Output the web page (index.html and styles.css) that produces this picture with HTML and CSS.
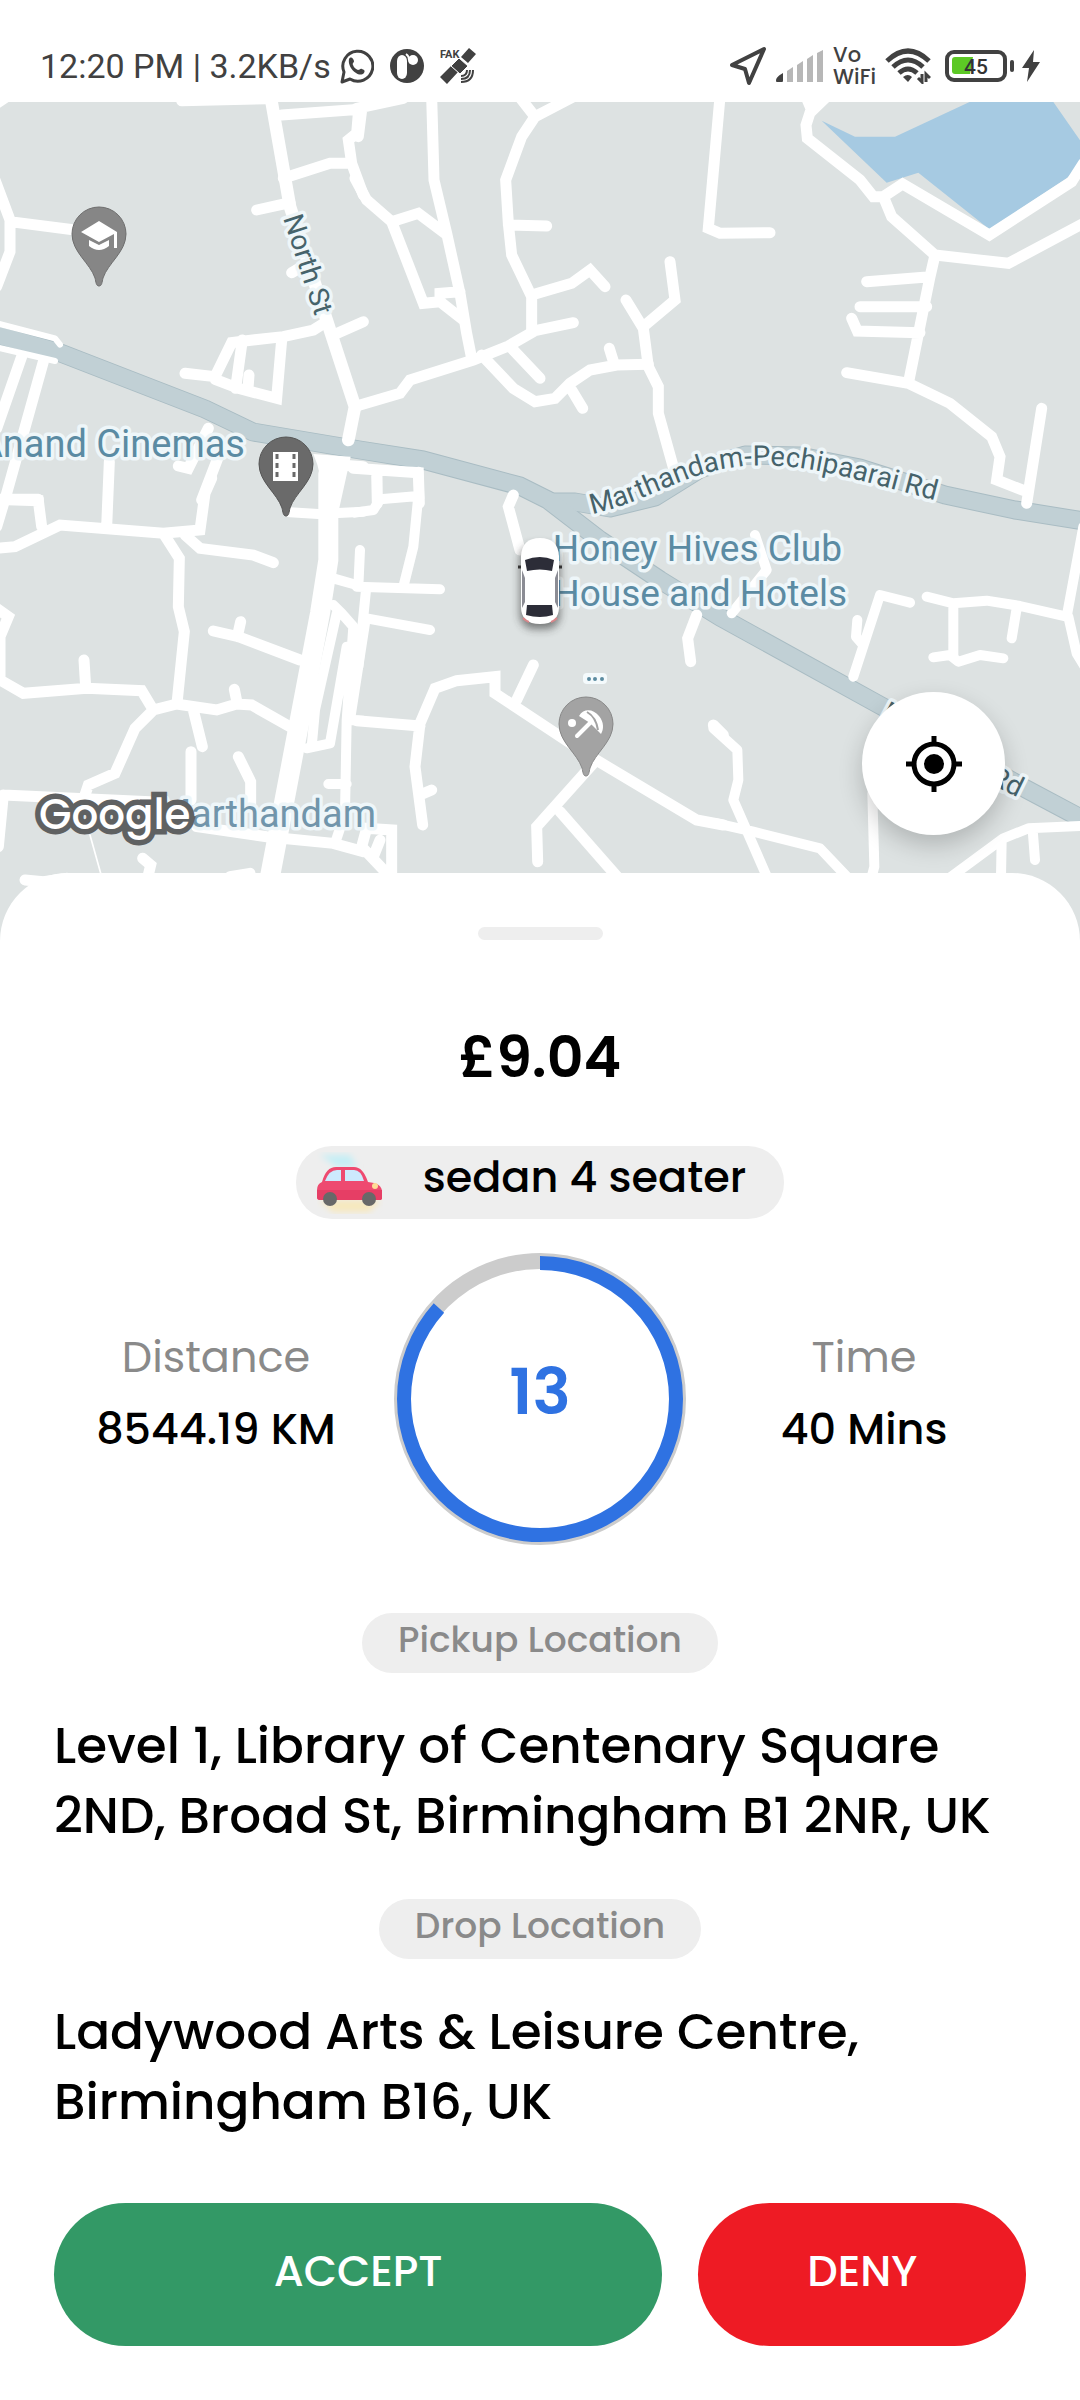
FILE: index.html
```html
<!DOCTYPE html>
<html lang="en">
<head>
<meta charset="utf-8">
<meta name="viewport" content="width=device-width, initial-scale=1">
<title>Ride request</title>
<link rel="stylesheet" href="styles.css">
</head>
<body>
<header class="status">
  <div class="status-left">
    <span>12:20 PM | 3.2KB/s</span>
    <div class="status-apps">
      <svg width="34" height="36" viewBox="0 0 34 36" fill="none" stroke="#414141" stroke-width="3" aria-hidden="true"><path d="M2 34l2-10a15 15 0 1 1 6 7z" stroke-linejoin="round"/><path d="M9 11c2-3 4-1 5 2 0 2-2 2-1 4 1 3 3 4 5 5 2 0 2-2 4-1 3 1 3 2 2 4-2 2-5 2-8 0-5-3-8-9-7-14z" fill="#414141" stroke="none"/></svg>
      <svg width="34" height="36" viewBox="0 0 34 36" aria-hidden="true"><circle cx="17" cy="18" r="17" fill="#414141"/><path d="M7 13a5 6 0 0 1 10 0v12a5 6 0 0 1-10 0z" fill="#fff"/><circle cx="23" cy="12" r="5" fill="#fff"/><path d="M16 6q3 2 3 6" stroke="#fff" stroke-width="2" fill="none"/></svg>
      <svg width="36" height="36" viewBox="0 0 36 36" aria-hidden="true"><text x="0" y="10" class="fake-label">FAK</text><g fill="#414141"><path d="M21 9l8-9 7 6-8 9zM0 29l11-11 7 6-11 12z"/><path d="M11 18l8-8 9 8-8 8z" stroke="#fff" stroke-width="1"/></g><g fill="none" stroke="#414141" stroke-width="2"><path d="M21 28c4 0 6-2 6-6M21 31c6 0 9-3 9-9M21 34c8 0 12-4 12-12"/></g></svg>
    </div>
  </div>
  <div class="status-right">
    <svg width="38" height="40" viewBox="0 0 38 40" fill="none" stroke="#414141" stroke-width="4" stroke-linejoin="round" aria-hidden="true"><path d="M35 3L20 37l-4-14L3 19z"/></svg>
    <svg width="48" height="34" viewBox="0 0 48 34" aria-hidden="true"><path d="M0 32c0-4 4-6 7-8v8q0 1-1 1H1q-1 0-1-1z" fill="#414141"/><path d="M11 22l6-4v15h-6zM21 16l6-4v21h-6zM31 10l6-4v27h-6zM41 4l6-3v32h-6z" fill="#b7b7b7"/></svg>
    <span class="vowifi">Vo<br>WiFi</span>
    <svg width="46" height="36" viewBox="0 0 46 36" fill="none" stroke="#414141" stroke-width="5" aria-hidden="true"><path d="M2 13q21-20 42 0M8 19q15-14 30 0M14 25q9-8 18 0"/><path d="M18 29q5-4 9 0l-4 5z" fill="#414141" stroke="none"/><path d="M37 26v8l-4-4M41 34v-8l4 4" stroke-width="3"/></svg>
    <div class="power">
      <svg width="69" height="32" viewBox="0 0 69 32" aria-label="Battery 45 percent" role="img"><rect x="2" y="2" width="58" height="28" rx="7" fill="#fff" stroke="#414141" stroke-width="4"/><path d="M10 7h18l-3 17H10q-3 0-3-3V10q0-3 3-3z" fill="#5cc825"/><path d="M67 12v8" stroke="#414141" stroke-width="4" stroke-linecap="round"/><text x="19" y="24" class="battery-label">45</text></svg>
      <svg width="18" height="34" viewBox="0 0 18 34" fill="#414141" aria-hidden="true"><path d="M12 1L0 19h7L5 33l13-20h-7z"/></svg>
    </div>
  </div>
</header>

<main>
<section class="map-area" aria-label="Map">
<svg class="map" viewBox="0 102 1080 840" role="img" aria-label="Map of Marthandam">
  <defs>
    <path id="pin" d="M0 79c-3 0-3-4-4-8C-9 56-27 45-27 27a27 27 0 0 1 54 0C27 45 9 56 4 71c-1 4-1 8-4 8z"/>
    <path id="pechipaarai" d="M592 514C650 502 685 470 748 466S860 482 970 509"/>
    <filter id="soft" x="-50%" y="-50%" width="200%" height="200%"><feGaussianBlur stdDeviation="4"/></filter>
  </defs>
  <rect y="102" width="1080" height="840" fill="#dde2e2"/>

  <!-- main roads -->
  <g class="highway">
    <path class="edge" d="M548 502L575 502 610 508 655 497 700 469 745 455 800 456 860 468 945 495 1015 510 1090 522"/>
    <path class="edge" d="M-10 333L58 352 205 409 253 432 360 450 423 460 520 486 548 500 600 540 660 580 720 617 885 708 1026 789 1090 823"/>
    <path d="M548 502L575 502 610 508 655 497 700 469 745 455 800 456 860 468 945 495 1015 510 1090 522"/>
    <path d="M-10 333L58 352 205 409 253 432 360 450 423 460 520 486 548 500 600 540 660 580 720 617 885 708 1026 789 1090 823"/>
  </g>

  <!-- north-west streets -->
  <svg class="streets" x="0" y="100" width="360" height="400" viewBox="0 0 1080 1200">
    <path d="M812-10L870 320 980 660 1065 920 1045 1020" stroke-width="38"/>
    <path d="M545 2L800-4M-10 10L20-10M845 45L1080 28M850 235L990 190H1045M770 330L870 308M1075 40L1070 100 1045 120 1055 190 1090 285M875 518L905 500"/>
    <path d="M-15 240L30 360V455L-10 560M30 365L225 390M-10 1198H115M65 770L-10 985M130 785L20 1180-10 1280"/>
    <path d="M-10 670L165 715 180 734M-10 742L165 783" stroke-width="18"/>
    <path d="M980 665L940 690 850 710 740 722 695 728 645 830 555 820M645 838L715 865 830 895 845 720M727 720L707 865M747 825L744 865M1000 705L1090 665"/>
    <path d="M625 985L565 1105 535 1098M655 1070L605 1200M1020 1095L1090 1100"/>
    <path d="M940 1062L1052 1070 1010 1260H965Q975 1140 940 1062z" fill="#fff" stroke="none"/>
  </svg>

  <!-- north streets -->
  <svg class="streets" x="360" y="100" width="360" height="400" viewBox="0 0 1080 1200">
    <path d="M-10 25L130-5M5 30L-5 110M215-10L222 240 260 400 300 580 320 700 335 775M-15 235L20 300 95 365 190 610 240 605M95 365L175 340 255 400M240 600V580L300 575M240 605L310 660"/>
    <path d="M470-20L525 50 650-15M525 50L485 110 437 240 445 370 455 465 515 590V690M445 375L560 378M515 585L635 550 690 510 735 560"/>
    <path d="M-10 918L120 880 150 840 340 780 445 738 525 692 640 668M365 765L460 865 525 905 585 895 630 850 690 810 770 795 865 793M455 745L540 835M635 870L668 925M762 790L748 745"/>
    <path d="M798 600L850 685 865 800 895 860V940L945 1120M850 680L945 600 930 485M1080-10L1045 385 1080 400 1230 398"/>
    <path d="M-20 1105L175 1118 178 1210M50 1120L52 1210"/>
  </svg>

  <!-- north-east streets and lake -->
  <svg class="streets" x="720" y="100" width="360" height="400" viewBox="0 0 1080 1200">
    <path d="M305 62L405 110H525L755 3H998L1085 128V190L1040 235 808 388 595 218 500 248z" fill="#a6cae2" stroke="none"/>
    <path d="M320-10L270 38 258 75 262 115 420 240 460 290H490L548 252 808 405 1055 245 1090 190M260-5L275 30M490 290L515 350 645 465 865 490 1090 370"/>
    <path d="M645 465L630 530 565 850M440 545L630 530M420 620H620M395 655L412 693 600 698M380 818L565 850 690 910 815 1010 840 1070 830 1140 920 1175M965 925L920 1210"/>
  </svg>

  <!-- south-west streets -->
  <svg class="streets" x="0" y="480" width="360" height="460" viewBox="0 0 1080 1380">
    <path d="M-10 205L45 200 180 135 490 160 600 150 615 40 635-5M320 140L328-55M125 140L115 62-5 58M490 160L538 235 535 380 553 455 532 660M555 165L600 205 760 225 820 248"/>
    <path d="M-10 385L25 410 0 470V600L70 640 260 625 425 632 460 690M252 540L257 620M250 960L265 915 345 880 405 745 460 690 530 672 650 690 710 672 755 675 870 740M703 628L712 672M580 690L607 800"/>
    <path d="M573 815V960M715 830L752 905V980M640 453L715 470 900 540M722 425L712 470M10 945L450 965M10 945L-5 1100M590 1040L800 1070 1000 1090 1090 1115"/>
    <path d="M270 1065L305 1190" stroke-width="5"/>
    <path d="M428 1135L452 1155 445 1185M75 1200L130 1205 200 1195M690 1190L750 1180"/>
    <path d="M985-20V240L960 400 810 1190" stroke-width="60"/>
    <path d="M870 97L955 102 1090 95M1000 295L1070 315M1000 375L1025 400 1060 440 1040 720 1035 1000 1005 1090M1010 400L945 690 935 800M920 805L990 790 1040 500M910 685H945M1040 720L1090 722M985 912H1040M1095 430L1050 720" stroke-width="30"/>
  </svg>

  <!-- south streets -->
  <svg class="streets" x="360" y="480" width="360" height="460" viewBox="0 0 1080 1380">
    <path d="M-15 98L40 90 60 58 175 48 160 200 130 320M178 55L175-25M52-20V60M-10 320L240 328M18 330L-5 560M20 415L210 450M0 210L-5 320" stroke-width="30"/>
    <path d="M460 45L445 80 480 210M-10 722L180 738M188 1035L165 860 180 730 225 625 290 602 405 590V640L700 835 1010 1020 1090 1035M470 660L520 555M180 945L215 930"/>
    <path d="M700 850L530 1040 533 1145M600 995L780 1200M1010 405L983 475 992 545M1060 735L1090 765"/>
    <path d="M95 1190V1050L20 1045 5 1100 90 1190M60 1080L40 1130"/>
  </svg>

  <!-- south-east streets -->
  <svg class="streets" x="720" y="480" width="360" height="460" viewBox="0 0 1080 1380">
    <path d="M-20 745L52 810 55 900 40 960 145 1200M-10 1030L100 1055 300 1105 390 1200M105 165L140 270 35 400M400 590L480 345 570 368M412 420L408 470 425 490" stroke-width="30"/>
    <path d="M620 350L700 370 800 362 900 378 1040 410 1090 140M700 370V525M890 385L875 475M640 532L690 525 715 545 780 525 850 535M1045 410L1070 520 1100 570" stroke-width="30"/>
    <path d="M457 940L463 1160 455 1190M680 1200L850 1075 925 1045 1080 1038M845 1080L843 1190M938 1050L945 1140" stroke-width="30"/>
  </svg>

  <!-- labels -->
  <g class="road-label">
    <text transform="translate(283 218) rotate(72)">North St</text>
    <text><textPath href="#pechipaarai">Marthandam-Pechipaarai Rd</textPath></text>
    <text transform="translate(880 718) rotate(28)">M</text>
    <text transform="translate(988 783) rotate(26)">Rd</text>
  </g>
  <g class="place-label">
    <text x="245" y="457" text-anchor="end" class="wide">Anand Cinemas</text>
    <text x="842" y="561" text-anchor="end">Honey Hives Club</text>
    <text x="847" y="606" text-anchor="end">House and Hotels</text>
    <text x="376" y="827" text-anchor="end" class="wide town">Marthandam</text>
  </g>
  <rect x="583" y="673" width="24" height="11" rx="4" fill="#f4fafc"/>
  <path d="M589 679h0M595 679h0M602 679h0" stroke="#5b8ba0" stroke-width="4" stroke-linecap="round"/>

  <!-- place pins -->
  <g stroke-width="1">
    <use href="#pin" x="99" y="207" fill="#868686" stroke="#6e6e6e"/>
    <use href="#pin" x="286" y="437" fill="#6a6a6a" stroke="#555"/>
    <use href="#pin" x="586" y="697" fill="#a3a3a3" stroke="#888"/>
  </g>
  <g fill="#fff">
    <path d="M81 232l18-11 18 11v16h-3v-14l-15 8z"/><path d="M89 240l10 5 10-5v6q-10 8-20 0z"/>
    <path d="M273 452h25v29h-25z"/>
    <path d="M277 454v27M294 454v27" stroke="#6a6a6a" stroke-width="3" stroke-dasharray="5 4"/>
    <circle cx="572" cy="723" r="4"/>
    <path d="M579 716c5-8 14-7 20 0 5 6 5 13 2 18l-8-8-3-3z"/>
    <path d="M577 736l17-17" stroke="#fff" stroke-width="4" stroke-linecap="round"/>
    <path d="M587 712q9 5 11 18" stroke="#a3a3a3" stroke-width="2" fill="none"/>
  </g>

  <!-- vehicle -->
  <rect x="520" y="545" width="40" height="84" rx="14" fill="#333" opacity=".6" filter="url(#soft)"/>
  <path d="M518 567h4M558 567h4" fill="none" stroke="#333" stroke-width="3"/>
  <path d="M521 556q1-18 19-18t19 18v51q0 17-19 17t-19-17z" fill="#fff"/>
  <path d="M525 560q15-6 29 0l-2 11q-12-3-25 0z" fill="#2c2d38"/>
  <path d="M522 570l3 8v24l-3 6zM558 570l-3 8v24l3 6z" fill="#8b8c94"/>
  <path d="M527 605h25l1 10q-13 4-27 0z" fill="#2c2d38"/>
  <path d="M523 618q3 3 6 4M557 618q-3 3-6 4" stroke="#d9868a" stroke-width="2" fill="none"/>

  <text x="39" y="829" class="map-brand">Google</text>
</svg>
<button class="locate" type="button" aria-label="Centre on my location">
  <svg width="56" height="56" viewBox="0 0 56 56" fill="none" stroke="#000" stroke-width="5" aria-hidden="true"><circle cx="28" cy="28" r="20"/><circle cx="28" cy="28" r="10" fill="#000" stroke="none"/><path d="M28 0v8M28 48v8M0 28h8M48 28h8"/></svg>
</button>
</section>

<section class="sheet">
  <div class="handle"></div>
  <h1 class="price">£9.04</h1>
  <div class="pill vehicle">
    <svg width="66" height="62" viewBox="0 0 66 62" aria-hidden="true">
      <defs><filter id="haze" x="-20%" y="-20%" width="140%" height="140%"><feGaussianBlur stdDeviation="3"/></filter></defs>
      <g filter="url(#haze)"><path d="M3 3h30l7 12H20z" fill="#c5eef5"/><path d="M2 48h62l-12 12H16z" fill="#f7e8bd"/></g>
      <path d="M0 45V38q0-6 5-8 4-15 14-15h18q9 0 14 15l6 1q8 2 8 9v6q0 2-3 2H3q-3 0-3-3z" fill="#ee4a70"/>
      <path d="M0 38h65v8q0 2-3 2H3q-3 0-3-3z" fill="#e63e65"/>
      <path d="M8 29q4-11 12-11h4v11zM28 18h9q7 0 10 11H28z" fill="#cdeafd"/>
      <circle cx="13" cy="47" r="7" fill="#686868"/><circle cx="52" cy="47" r="7" fill="#686868"/>
      <circle cx="58" cy="34" r="3" fill="#ffdc96"/>
    </svg>
    <span>sedan 4 seater</span>
  </div>

  <div class="stats">
    <dl class="stat"><dt>Distance</dt><dd>8544.19 KM</dd></dl>
    <div class="timer" role="timer">
      <svg class="ring" viewBox="0 0 292 292" aria-hidden="true" fill="none">
        <circle cx="146" cy="146" r="138" stroke="#ccc" stroke-width="16"/>
        <circle cx="146" cy="146" r="136" stroke="#2f72e2" stroke-width="14" pathLength="15" stroke-dasharray="13 15" transform="rotate(-90 146 146)"/>
      </svg>
      <span class="count">13</span>
    </div>
    <dl class="stat"><dt>Time</dt><dd>40 Mins</dd></dl>
  </div>

  <h2 class="pill place-tag">Pickup Location</h2>
  <p class="address">Level 1, Library of Centenary Square 2ND, Broad St, Birmingham B1 2NR, UK</p>
  <h2 class="pill place-tag">Drop Location</h2>
  <p class="address">Ladywood Arts &amp; Leisure Centre, Birmingham B16, UK</p>

  <div class="actions">
    <button class="action accept" type="button">ACCEPT</button>
    <button class="action deny" type="button">DENY</button>
  </div>
</section>
</main>
</body>
</html>
```
FILE: styles.css
```css
* { box-sizing: border-box; }

body {
  margin: 0;
  background: #fff;
  color: #000;
  font-family: Poppins, Inter, sans-serif;
}

svg { display: block; flex: none; }

h1, h2, p, dl, dd { margin: 0; }

button {
  border: 0;
  font: inherit;
  cursor: pointer;
}

/* Status bar */
.status {
  display: flex;
  justify-content: space-between;
  align-items: center;
  min-height: 102px;
  padding: 30px 40px 0;
  color: #414141;
  font: 400 34px/40px Roboto, sans-serif;
}

.status-left,
.status-right,
.status-apps,
.power {
  display: flex;
  align-items: center;
}

.status-left,
.status-right { gap: 9px; }
.status-apps { gap: 16px; }
.power { gap: 8px; padding-left: 5px; }

.vowifi { font: 500 21px/22px Poppins, Inter, sans-serif; }
.fake-label { font: 700 11px Roboto, sans-serif; fill: #414141; }
.battery-label { font: 500 21px Roboto, sans-serif; fill: #333; }

/* Map */
.map-area { position: relative; }

.map {
  width: 100%;
  height: auto;
}

.highway path {
  fill: none;
  stroke: #c1d0d5;
  stroke-width: 17px;
  stroke-linejoin: round;
}

.highway .edge {
  stroke: #a9bcc3;
  stroke-width: 19px;
}

.streets {
  overflow: visible;
  fill: none;
  stroke: #fff;
  stroke-width: 33px;
  stroke-linecap: round;
}

.streets path[stroke-width] { stroke-linejoin: round; }

.road-label {
  font: 400 28px Roboto, sans-serif;
  fill: #46636b;
  stroke: #eef6f9;
  stroke-width: 7px;
  stroke-linejoin: round;
  paint-order: stroke;
}

.place-label {
  font: 400 37px Roboto, sans-serif;
  fill: #5b8ba3;
  stroke: #eef6f9;
  stroke-width: 7px;
  stroke-linejoin: round;
  paint-order: stroke;
}

.place-label .wide { font-size: 38px; }
.place-label .town { fill: #7195ab; }

.map-brand {
  font: 500 42px Poppins, Lato, sans-serif;
  fill: #fff;
  stroke: #5f6162;
  stroke-width: 11px;
  paint-order: stroke;
}

.locate {
  position: absolute;
  right: 75px;
  bottom: 107px;
  display: grid;
  place-items: center;
  width: 143px;
  height: 143px;
  padding: 0;
  border-radius: 50%;
  background: #fff;
  box-shadow: 0 10px 24px rgba(0, 0, 0, .2);
}

/* Request sheet */
.sheet {
  position: relative;
  display: flex;
  flex-direction: column;
  align-items: center;
  margin-top: -69px;
  padding: 54px;
  border-radius: 68px 68px 0 0;
  background: #fff;
}

.handle {
  width: 125px;
  height: 13px;
  border-radius: 7px;
  background: #eee;
}

.price {
  margin-top: 75px;
  font-size: 57px;
  font-weight: 600;
  line-height: 84px;
}

.pill {
  border-radius: 36px;
  background: #eee;
  font-weight: 500;
}

.vehicle {
  display: flex;
  align-items: center;
  gap: 40px;
  margin-top: 47px;
  padding: 1px 38px 1px 21px;
  font-size: 43px;
  line-height: 60px;
}

.vehicle span { padding-bottom: 11px; }

.stats {
  display: grid;
  grid-template-columns: repeat(3, 1fr);
  align-items: center;
  justify-items: center;
  width: 100%;
  margin-top: 34px;
}

.stat {
  padding-bottom: 12px;
  font-size: 43px;
  line-height: 70px;
  text-align: center;
  white-space: nowrap;
}

.stat dt { color: #8a8a8a; }

.stat dd {
  margin-top: 2px;
  font-weight: 500;
}

.timer {
  display: grid;
  place-items: center;
}

.ring,
.count { grid-area: 1 / 1; }

.ring { width: 292px; }

.count {
  padding-bottom: 14px;
  color: #2f72e2;
  font-size: 64px;
  font-weight: 600;
  line-height: 70px;
}

.place-tag {
  margin-top: 68px;
  padding: 2px 36px 8px;
  color: #8a8a8a;
  font-size: 36px;
  line-height: 50px;
}

.address + .place-tag { margin-top: 48px; }

.address {
  width: 100%;
  margin-top: 38px;
  font-size: 50px;
  font-weight: 500;
  line-height: 70px;
}

.actions {
  display: flex;
  gap: 36px;
  width: 100%;
  margin-top: 66px;
}

.action {
  min-height: 143px;
  padding: 0 0 8px;
  border-radius: 72px;
  color: #fff;
  font-size: 43px;
  font-weight: 500;
  line-height: 60px;
}

.accept { flex: 13; background: #339966; }
.deny { flex: 7; background: #ee1b24; }
```
